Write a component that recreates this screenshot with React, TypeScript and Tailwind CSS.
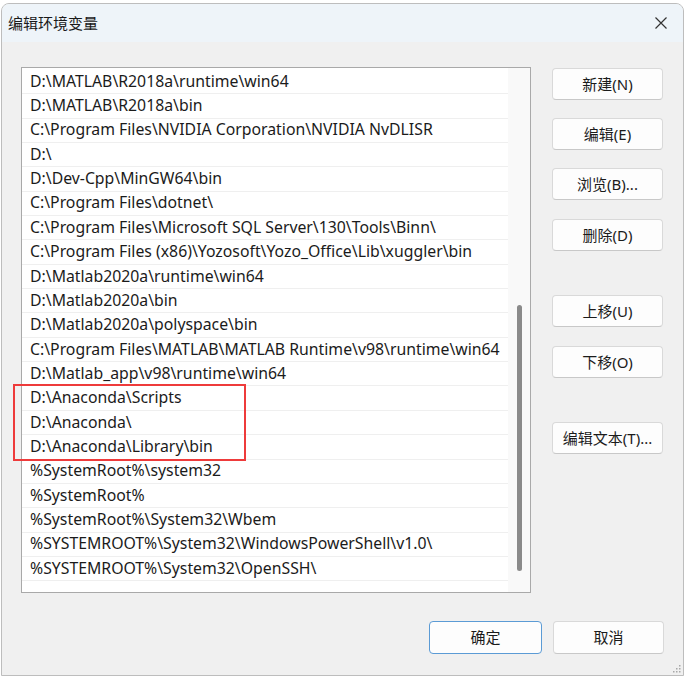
import React from "react";

const rows = [
  "D:\\MATLAB\\R2018a\\runtime\\win64",
  "D:\\MATLAB\\R2018a\\bin",
  "C:\\Program Files\\NVIDIA Corporation\\NVIDIA NvDLISR",
  "D:\\",
  "D:\\Dev-Cpp\\MinGW64\\bin",
  "C:\\Program Files\\dotnet\\",
  "C:\\Program Files\\Microsoft SQL Server\\130\\Tools\\Binn\\",
  "C:\\Program Files (x86)\\Yozosoft\\Yozo_Office\\Lib\\xuggler\\bin",
  "D:\\Matlab2020a\\runtime\\win64",
  "D:\\Matlab2020a\\bin",
  "D:\\Matlab2020a\\polyspace\\bin",
  "C:\\Program Files\\MATLAB\\MATLAB Runtime\\v98\\runtime\\win64",
  "D:\\Matlab_app\\v98\\runtime\\win64",
  "D:\\Anaconda\\Scripts",
  "D:\\Anaconda\\",
  "D:\\Anaconda\\Library\\bin",
  "%SystemRoot%\\system32",
  "%SystemRoot%",
  "%SystemRoot%\\System32\\Wbem",
  "%SYSTEMROOT%\\System32\\WindowsPowerShell\\v1.0\\",
  "%SYSTEMROOT%\\System32\\OpenSSH\\",
  "",
];

const font = { fontFamily: '"Noto Sans", "Noto Sans CJK SC", sans-serif' };

function Btn({ label, className = "" }: { label: string; className?: string }) {
  return (
    <div
      className={
        "flex h-[32px] w-[111px] items-center justify-center rounded-[4px] border border-[#d9d9d9] border-b-[#c8c8c8] bg-[#fdfdfd] text-[15px] text-[#1b1b1b] " +
        className
      }
    >
      {label}
    </div>
  );
}

export default function App() {
  return (
    <div className="h-[682px] w-[685px] bg-white pl-[1px] pt-[3px]" style={font}>
      <div className="relative flex h-[673px] w-[683px] flex-col overflow-hidden rounded-t-[8px] border border-[#bdbdbd] bg-[#f0f0f0]">
        {/* title bar */}
        <div className="flex h-[38px] shrink-0 items-center justify-between bg-[#eef4f9] pl-[6px] pr-[15px]">
          <span className="text-[15px] text-[#1a1a1a]" style={{ fontFamily: '"Noto Sans CJK SC", sans-serif' }}>
            编辑环境变量
          </span>
          <svg width="14" height="14" viewBox="0 0 14 14">
            <path d="M1.5 1.5 L12.5 12.5 M12.5 1.5 L1.5 12.5" stroke="#333" strokeWidth="1.2" />
          </svg>
        </div>

        {/* body */}
        <div className="flex flex-1 flex-col pl-[19px] pr-[19px] pt-[25px]">
          <div className="flex gap-[21px]">
            {/* list */}
            <div className="flex h-[526px] w-[510px] border border-[#a9a9a9] bg-white">
              <div className="flex min-w-0 flex-1 flex-col overflow-hidden pt-[2px]">
                {rows.map((r, i) => (
                  <div
                    key={i}
                    className="flex h-[24.35px] shrink-0 items-center border-b border-[#efefef] pl-[8px] text-[15.8px] leading-none text-[#1b1b1b] whitespace-nowrap"
                  >
                    {r}
                  </div>
                ))}
              </div>
              <div className="flex w-[22px] shrink-0 justify-center bg-[#f9f9f9] pt-[237px]">
                <div className="h-[266px] w-[5px] rounded-full bg-[#8a8a8a]" />
              </div>
            </div>

            {/* side buttons */}
            <div className="flex flex-col pt-[1px]">
              <Btn label="新建(N)" />
              <Btn label="编辑(E)" className="mt-[18px]" />
              <Btn label="浏览(B)..." className="mt-[18px]" />
              <Btn label="删除(D)" className="mt-[19px]" />
              <Btn label="上移(U)" className="mt-[44px]" />
              <Btn label="下移(O)" className="mt-[19px]" />
              <Btn label="编辑文本(T)..." className="mt-[44px]" />
            </div>
          </div>

          {/* bottom buttons */}
          <div className="mt-[28px] flex justify-end gap-[11px]">
            <div className="flex h-[33px] w-[113px] items-center justify-center rounded-[4px] border border-[#5b9bd5] bg-[#fdfdfd] text-[15px] text-[#1b1b1b]">
              确定
            </div>
            <Btn label="取消" className="h-[33px]" />
          </div>
        </div>

        {/* resize grip */}
        <svg className="absolute bottom-[2px] right-[2px]" width="8" height="8" viewBox="0 0 8 8">
          <rect x="6" y="0" width="1.5" height="1.5" fill="#a8a8a8" />
          <rect x="3" y="3" width="1.5" height="1.5" fill="#a8a8a8" />
          <rect x="6" y="3" width="1.5" height="1.5" fill="#a8a8a8" />
          <rect x="0" y="6" width="1.5" height="1.5" fill="#a8a8a8" />
          <rect x="3" y="6" width="1.5" height="1.5" fill="#a8a8a8" />
          <rect x="6" y="6" width="1.5" height="1.5" fill="#a8a8a8" />
        </svg>

        {/* red highlight */}
        <div className="pointer-events-none absolute left-[11px] top-[380px] h-[77px] w-[233px] border-2 border-[#ee3b3b]" />
      </div>
    </div>
  );
}
